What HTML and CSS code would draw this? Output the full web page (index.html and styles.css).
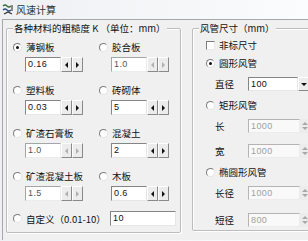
FILE: index.html
```html
<!DOCTYPE html>
<html>
<head>
    <meta charset="utf-8">
    <title>风速计算</title>
    <link rel="stylesheet" href="styles.css">
</head>
<body>
  <div class="window">
    <div class="titlebar">
      <svg class="app-icon" width="12" height="11" viewBox="0 0 12 11">
        <path d="M1 2 Q3 0 5 2 T9 2" fill="none" stroke="#3a6d3a" stroke-width="1.3"/>
        <path d="M1 6 Q3 4 5 6 T9 6" fill="none" stroke="#2a4f8a" stroke-width="1.3"/>
        <path d="M2 10 L6 8 L10 10" fill="none" stroke="#333" stroke-width="1.2"/>
        <rect x="9" y="1" width="2" height="6" fill="#8a8a8a"/>
      </svg>
      <span class="title">风速计算</span>
    </div>

    <div class="client">
      <!-- 左侧：材料粗糙度 -->
      <div class="group group-left">
        <span class="group-title">各种材料的粗糙度 K （单位：mm）</span>
        <div class="grid">
          <div class="cell">
            <div class="option"><span class="radio checked"></span>薄钢板</div>
            <div class="spin">
              <div class="field">0.16</div>
              <div class="btn"><span class="tri-left"></span></div>
              <div class="btn"><span class="tri-right"></span></div>
            </div>
          </div>
          <div class="cell">
            <div class="option"><span class="radio"></span>胶合板</div>
            <div class="spin off">
              <div class="field">1.0</div>
              <div class="btn"><span class="tri-left"></span></div>
              <div class="btn"><span class="tri-right"></span></div>
            </div>
          </div>
          <div class="cell">
            <div class="option"><span class="radio"></span>塑料板</div>
            <div class="spin">
              <div class="field">0.03</div>
              <div class="btn"><span class="tri-left"></span></div>
              <div class="btn"><span class="tri-right"></span></div>
            </div>
          </div>
          <div class="cell">
            <div class="option"><span class="radio"></span>砖砌体</div>
            <div class="spin">
              <div class="field">5</div>
              <div class="btn"><span class="tri-left"></span></div>
              <div class="btn"><span class="tri-right"></span></div>
            </div>
          </div>
          <div class="cell">
            <div class="option"><span class="radio"></span>矿渣石膏板</div>
            <div class="spin off">
              <div class="field">1.0</div>
              <div class="btn"><span class="tri-left"></span></div>
              <div class="btn"><span class="tri-right"></span></div>
            </div>
          </div>
          <div class="cell">
            <div class="option"><span class="radio"></span>混凝土</div>
            <div class="spin">
              <div class="field">2</div>
              <div class="btn"><span class="tri-left"></span></div>
              <div class="btn"><span class="tri-right"></span></div>
            </div>
          </div>
          <div class="cell">
            <div class="option"><span class="radio"></span>矿渣混凝土板</div>
            <div class="spin off">
              <div class="field">1.5</div>
              <div class="btn"><span class="tri-left"></span></div>
              <div class="btn"><span class="tri-right"></span></div>
            </div>
          </div>
          <div class="cell">
            <div class="option"><span class="radio"></span>木板</div>
            <div class="spin">
              <div class="field">0.6</div>
              <div class="btn"><span class="tri-left"></span></div>
              <div class="btn"><span class="tri-right"></span></div>
            </div>
          </div>
        </div>
        <div class="custom-row">
          <div class="option custom-label"><span class="radio"></span>自定义（0.01-10）</div>
          <div class="field custom-field">10</div>
        </div>
      </div>

      <!-- 右侧：风管尺寸 -->
      <div class="group group-right">
        <span class="group-title">风管尺寸（mm）</span>
        <div class="option"><span class="check"></span>非标尺寸</div>
        <div class="option after-check"><span class="radio checked"></span>圆形风管</div>
        <div class="size-row after-option">
          <span class="size-label">直径</span>
          <div class="combo">
            <div class="field">100</div>
            <div class="drop"><span class="tri-down"></span></div>
          </div>
        </div>
        <div class="option after-field"><span class="radio"></span>矩形风管</div>
        <div class="size-row after-option">
          <span class="size-label">长</span>
          <div class="updown">
            <div class="field">1000</div>
            <div class="ud-btns"><span class="tri-up"></span><span class="tri-down"></span></div>
          </div>
        </div>
        <div class="size-row after-size">
          <span class="size-label">宽</span>
          <div class="updown">
            <div class="field">1000</div>
            <div class="ud-btns"><span class="tri-up"></span><span class="tri-down"></span></div>
          </div>
        </div>
        <div class="option after-field"><span class="radio"></span>椭圆形风管</div>
        <div class="size-row after-option">
          <span class="size-label">长径</span>
          <div class="updown">
            <div class="field">1000</div>
            <div class="ud-btns"><span class="tri-up"></span><span class="tri-down"></span></div>
          </div>
        </div>
        <div class="size-row after-size last">
          <span class="size-label">短径</span>
          <div class="updown">
            <div class="field">800</div>
            <div class="ud-btns"><span class="tri-up"></span><span class="tri-down"></span></div>
          </div>
        </div>
      </div>
    </div>
  </div>
</body>
</html>
```

FILE: styles.css
```css
body {
    margin: 0;
    font-family: "Noto Sans CJK SC", "Liberation Sans", sans-serif;
    font-size: 9.5px;
    color: #111;
}

.window {
    width: 308px;
    height: 241px;
    overflow: hidden;
    background: linear-gradient(to right, #eef0f3, #fbfcfd);
}

/* 标题栏 */
.titlebar {
    height: 19px;
    display: flex;
    align-items: center;
    padding-left: 2px;
}

.app-icon {
    display: block;
}

.title {
    margin-left: 2px;
    font-size: 10px;
    color: #333;
}

/* 窗口内容区 */
.client {
    margin-left: 2px;
    height: 221px;
    border-top: 1px solid #a8a8a8;
    border-left: 1px solid #a8a8a8;
    background: #f0f0f0;
    display: flex;
    align-items: flex-start;
    padding: 8px 0 0 3px;
    box-sizing: border-box;
}

.group {
    position: relative;
    box-sizing: border-box;
    flex-shrink: 0;
    border: 1px solid #bcbcbc;
    border-radius: 2px;
    box-shadow: inset 1px 1px 0 #fff, 1px 1px 0 #fff;
}

.group-title {
    position: absolute;
    top: -8px;
    left: 6px;
    padding: 0 1px;
    line-height: 14px;
    background: #f0f0f0;
    white-space: nowrap;
}

.group-left {
    width: 175px;
    height: 205px;
    padding: 11px 0 0 6px;
}

.group-right {
    width: 130px;
    height: 203px;
    margin-left: 11px;
    padding: 9px 0 0 13px;
}

/* 单选 / 复选 */
.option {
    display: flex;
    align-items: center;
    height: 14px;
    white-space: nowrap;
}

.radio {
    width: 9px;
    height: 9px;
    box-sizing: border-box;
    margin-right: 4px;
    border-radius: 50%;
    border: 1px solid;
    border-color: #7d7d7d #e4e4e4 #e4e4e4 #7d7d7d;
    background: #fff;
    position: relative;
    flex-shrink: 0;
}

.radio.checked::after {
    content: "";
    position: absolute;
    left: 2px;
    top: 2px;
    width: 3px;
    height: 3px;
    border-radius: 50%;
    background: #111;
}

.check {
    width: 9px;
    height: 9px;
    box-sizing: border-box;
    margin-right: 4px;
    border: 1px solid;
    border-color: #7d7d7d #e8e8e8 #e8e8e8 #7d7d7d;
    background: #fff;
    flex-shrink: 0;
}

/* 左侧网格 */
.grid {
    display: grid;
    grid-template-columns: 86px 1fr;
    row-gap: 11px;
}

.spin {
    display: flex;
    height: 15px;
    margin: 3px 0 0 12px;
}

.field {
    box-sizing: border-box;
    height: 15px;
    width: 36px;
    padding-left: 2px;
    border: 1px solid;
    border-color: #858585 #e6e6e6 #e6e6e6 #858585;
    background: #fff;
    font-family: "Liberation Sans", sans-serif;
    font-size: 9px;
    line-height: 13px;
    letter-spacing: 0.4px;
    color: #111;
}

.btn {
    box-sizing: border-box;
    width: 11px;
    height: 15px;
    border: 1px solid;
    border-color: #fff #8a8a8a #8a8a8a #fff;
    background: #ececec;
    display: flex;
    align-items: center;
    justify-content: center;
}

.tri-left {
    width: 0;
    height: 0;
    border-top: 3px solid transparent;
    border-bottom: 3px solid transparent;
    border-right: 3px solid #111;
}

.tri-right {
    width: 0;
    height: 0;
    border-top: 3px solid transparent;
    border-bottom: 3px solid transparent;
    border-left: 3px solid #111;
}

.tri-down {
    width: 0;
    height: 0;
    border-left: 3px solid transparent;
    border-right: 3px solid transparent;
    border-top: 3px solid #111;
}

.tri-up {
    width: 0;
    height: 0;
    border-left: 3px solid transparent;
    border-right: 3px solid transparent;
    border-bottom: 3px solid #111;
}

.spin.off .field {
    color: #555;
    border-color: #a5a5a5 #ececec #ececec #a5a5a5;
}

.spin.off .tri-left {
    border-right-color: #b0b0b0;
}

.spin.off .tri-right {
    border-left-color: #b0b0b0;
}

.custom-row {
    display: flex;
    align-items: center;
    margin-top: 10px;
}

.custom-label {
    width: 97px;
}

.custom-field {
    width: 66px;
}

/* 右侧尺寸 */
.after-check {
    margin-top: 4px;
}

.after-option {
    margin-top: 7px;
}

.after-field {
    margin-top: 7px;
}

.after-size {
    margin-top: 11px;
}

.size-row.last {
    margin-top: 13px;
}

.size-row {
    display: flex;
    align-items: center;
    height: 14px;
}

.size-label {
    width: 33px;
    margin-left: 9px;
    flex-shrink: 0;
}

.combo,
.updown {
    display: flex;
    flex-shrink: 0;
}

.combo .field {
    width: 50px;
    height: 14px;
    line-height: 12px;
}

.updown .field {
    width: 52px;
    height: 14px;
    line-height: 12px;
    color: #a0a0a0;
    background: #f9f9f9;
    border-color: #b4b4b4 #ececec #ececec #b4b4b4;
}

.drop {
    box-sizing: border-box;
    width: 12px;
    height: 14px;
    border: 1px solid;
    border-color: #fff #8a8a8a #8a8a8a #fff;
    background: #ececec;
    display: flex;
    align-items: center;
    justify-content: center;
}

.ud-btns {
    box-sizing: border-box;
    width: 10px;
    height: 14px;
    background: #ececec;
    display: flex;
    flex-direction: column;
    align-items: center;
    justify-content: space-evenly;
}

.ud-btns .tri-up {
    border-bottom-color: #a8a8a8;
}

.ud-btns .tri-down {
    border-top-color: #a8a8a8;
}
```
